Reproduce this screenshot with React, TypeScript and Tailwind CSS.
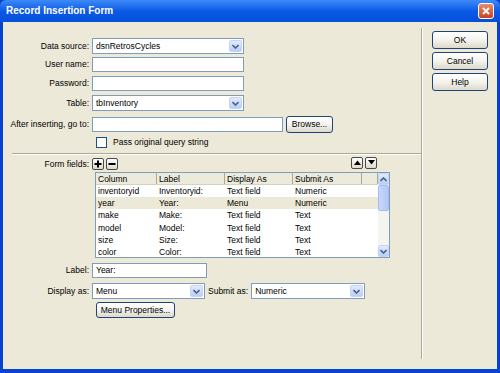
import React from 'react';

const FONT = { fontFamily: '"Liberation Sans", Arial, sans-serif' };

function Chevron({ up = false }: { up?: boolean }) {
  return (
    <svg width="7" height="5" viewBox="0 0 7 5">
      <path d={up ? 'M0.5 4 L3.5 1 L6.5 4' : 'M0.5 1 L3.5 4 L6.5 1'} fill="none" stroke="#4D6185" strokeWidth="1.6" />
    </svg>
  );
}

function Select({ value, width }: { value: string; width: string }) {
  return (
    <div className={`flex items-center h-[16px] ${width} bg-white border border-[#7F9DB9] pl-[3px] pr-[1px]`}>
      <span className="flex-1 text-[8.5px] text-black leading-none">{value}</span>
      <div className="w-[13px] h-[12px] rounded-[2px] bg-gradient-to-b from-[#E3ECFD] to-[#B9CDF7] border border-[#C3D3FD] flex items-center justify-center">
        <Chevron />
      </div>
    </div>
  );
}

function Input({ value = '', width }: { value?: string; width: string }) {
  return (
    <div className={`flex items-center h-[15px] ${width} bg-white border border-[#7F9DB9] pl-[3px]`}>
      <span className="text-[8.5px] text-black leading-none">{value}</span>
    </div>
  );
}

function XPButton({ label, className = '' }: { label: string; className?: string }) {
  return (
    <div className={`flex items-center justify-center rounded-[3px] border border-[#22437A] bg-gradient-to-b from-white via-[#F4F3EE] to-[#DCD9CB] text-[8.5px] text-black leading-none ${className}`}>
      {label}
    </div>
  );
}

function Row({ label, children, className = '' }: { label: string; children: React.ReactNode; className?: string }) {
  return (
    <div className={`flex items-center ${className}`}>
      <div className="w-[89px] pr-[3px] text-right text-[8.5px] text-black leading-none">{label}</div>
      {children}
    </div>
  );
}

function SmallIconBtn({ children }: { children: React.ReactNode }) {
  return (
    <div className="w-[12px] h-[12px] rounded-[2px] border border-[#4A4A4A] bg-gradient-to-b from-white to-[#DCD9CB] flex items-center justify-center">
      {children}
    </div>
  );
}

const ROWS = [
  ['inventoryid', 'Inventoryid:', 'Text field', 'Numeric'],
  ['year', 'Year:', 'Menu', 'Numeric'],
  ['make', 'Make:', 'Text field', 'Text'],
  ['model', 'Model:', 'Text field', 'Text'],
  ['size', 'Size:', 'Text field', 'Text'],
  ['color', 'Color:', 'Text field', 'Text'],
];

const COLS = ['w-[61px]', 'w-[68px]', 'w-[68px]', 'w-[69px]', 'w-[16px]'];

export default function App() {
  return (
    <div style={FONT} className="w-[500px] h-[373px] bg-[#0842D0] flex flex-col overflow-hidden">
      {/* title bar */}
      <div className="h-[22px] shrink-0 flex items-center px-[6px] bg-gradient-to-b from-[#3D8BF7] via-[#0A5AE6] to-[#0650DA] rounded-t-[6px]">
        <span className="flex-1 text-[10px] font-bold text-white leading-none">Record Insertion Form</span>
        <div className="w-[16px] h-[16px] rounded-[3px] border border-white bg-gradient-to-b from-[#E98A6E] to-[#C8401E] flex items-center justify-center">
          <svg width="8" height="8" viewBox="0 0 8 8">
            <path d="M1 1 L7 7 M7 1 L1 7" stroke="white" strokeWidth="1.8" />
          </svg>
        </div>
      </div>

      {/* body */}
      <div className="flex-1 mx-[3px] mb-[4px] bg-[#ECE9D8] flex">
        {/* left pane */}
        <div className="w-[418px] flex flex-col pt-[16px]">
          <Row label="Data source:"><Select value="dsnRetrosCycles" width="w-[152px]" /></Row>
          <Row label="User name:" className="mt-[3px]"><Input width="w-[152px]" /></Row>
          <Row label="Password:" className="mt-[4px]"><Input width="w-[152px]" /></Row>
          <Row label="Table:" className="mt-[4px]"><Select value="tbInventory" width="w-[152px]" /></Row>
          <Row label="After inserting, go to:" className="mt-[5px]">
            <Input width="w-[191px]" />
            <XPButton label="Browse..." className="ml-[3px] w-[47px] h-[17px]" />
          </Row>
          <div className="flex items-center mt-[4px] ml-[93px]">
            <div className="w-[11px] h-[11px] bg-white border border-[#1C5180]" />
            <span className="ml-[6px] text-[8.5px] text-black leading-none">Pass original query string</span>
          </div>
          <div className="mt-[5px] ml-[9px] h-[2px] border-t border-[#ACA899] border-b border-b-white" />

          <div className="flex items-center mt-[3px]">
            <div className="w-[89px] pr-[3px] text-right text-[8.5px] text-black leading-none">Form fields:</div>
            <SmallIconBtn>
              <svg width="8" height="8" viewBox="0 0 8 8"><path d="M4 0.5 V7.5 M0.5 4 H7.5" stroke="black" strokeWidth="2" /></svg>
            </SmallIconBtn>
            <div className="ml-[2px]">
              <SmallIconBtn>
                <svg width="8" height="8" viewBox="0 0 8 8"><path d="M0.5 4 H7.5" stroke="black" strokeWidth="2" /></svg>
              </SmallIconBtn>
            </div>
            <div className="ml-[233px] flex gap-[2px] -mt-[3px]">
              <SmallIconBtn>
                <svg width="7" height="5" viewBox="0 0 7 5"><path d="M0 5 L3.5 0.5 L7 5 Z" fill="black" /></svg>
              </SmallIconBtn>
              <SmallIconBtn>
                <svg width="7" height="5" viewBox="0 0 7 5"><path d="M0 0 L3.5 4.5 L7 0 Z" fill="black" /></svg>
              </SmallIconBtn>
            </div>
          </div>

          {/* table */}
          <div className="mt-[2px] ml-[92px] w-[295px] h-[86px] border border-[#7F9DB9] bg-white flex">
            <div className="flex-1 flex flex-col">
              <div className="flex h-[12px] bg-[#EBEADB] border-b border-[#D6D2C2]">
                {['Column', 'Label', 'Display As', 'Submit As', ''].map((h, i) => (
                  <div key={i} className={`${COLS[i]} h-full pl-[2px] border-r border-[#ACA899] text-[8.5px] text-black leading-[12px]`}>{h}</div>
                ))}
              </div>
              {ROWS.map((r, ri) => (
                <div key={ri} className={`flex h-[12.2px] ${ri === 1 ? 'bg-[#ECE9D8]' : ''}`}>
                  {r.map((c, ci) => (
                    <div key={ci} className={`${COLS[ci]} pl-[2px] text-[8.5px] text-black leading-[12.2px] whitespace-nowrap overflow-hidden`}>{c}</div>
                  ))}
                </div>
              ))}
            </div>
            {/* scrollbar */}
            <div className="w-[12px] bg-[#F4F4F0] flex flex-col">
              <div className="h-[12px] rounded-[2px] bg-gradient-to-b from-[#E3ECFD] to-[#B9CDF7] border border-[#C3D3FD] flex items-center justify-center"><Chevron up /></div>
              <div className="h-[26px] rounded-[2px] bg-gradient-to-r from-[#C8D7FC] to-[#B3C8F5] border border-[#A5BCEF]" />
              <div className="flex-1" />
              <div className="h-[12px] rounded-[2px] bg-gradient-to-b from-[#E3ECFD] to-[#B9CDF7] border border-[#C3D3FD] flex items-center justify-center"><Chevron /></div>
            </div>
          </div>

          <Row label="Label:" className="mt-[5px]"><Input value="Year:" width="w-[115px]" /></Row>
          <Row label="Display as:" className="mt-[5px]">
            <Select value="Menu" width="w-[113px]" />
            <span className="ml-[3px] text-[8.5px] text-black leading-none">Submit as:</span>
            <div className="ml-[3px]"><Select value="Numeric" width="w-[114px]" /></div>
          </Row>
          <div className="mt-[3px] ml-[93px]">
            <XPButton label="Menu Properties..." className="w-[79px] h-[16px]" />
          </div>
        </div>

        {/* separator */}
        <div className="mt-[6px] mb-[10px] w-[2px] border-l border-[#ACA899] border-r border-r-white" />

        {/* right pane */}
        <div className="flex flex-col gap-[3px] pt-[9px] pl-[9px]">
          <XPButton label="OK" className="w-[56px] h-[18px]" />
          <XPButton label="Cancel" className="w-[56px] h-[18px]" />
          <XPButton label="Help" className="w-[56px] h-[18px]" />
        </div>
      </div>
    </div>
  );
}
